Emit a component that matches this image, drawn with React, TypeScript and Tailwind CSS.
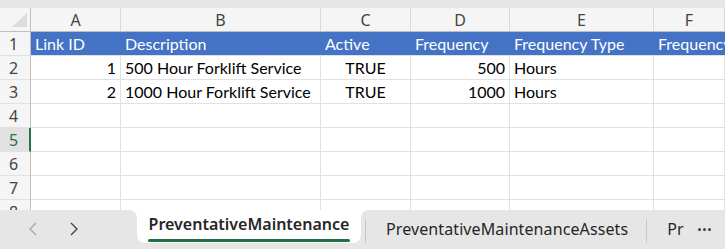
import React from 'react';

const cols = ['A', 'B', 'C', 'D', 'E', 'F'];
const widths = ['w-[90px]', 'w-[200px]', 'w-[90px]', 'w-[99px]', 'w-[144px]', 'flex-1'];

type Cell = { text?: string; align?: 'left' | 'right' | 'center' };

const headerRow: string[] = ['Link ID', 'Description', 'Active', 'Frequency', 'Frequency Type', 'Frequency'];

const dataRows: Cell[][] = [
    [
        { text: '1', align: 'right' },
        { text: '500 Hour Forklift Service' },
        { text: 'TRUE', align: 'center' },
        { text: '500', align: 'right' },
        { text: 'Hours' },
        {},
    ],
    [
        { text: '2', align: 'right' },
        { text: '1000 Hour Forklift Service' },
        { text: 'TRUE', align: 'center' },
        { text: '1000', align: 'right' },
        { text: 'Hours' },
        {},
    ],
    [{}, {}, {}, {}, {}, {}],
    [{}, {}, {}, {}, {}, {}],
    [{}, {}, {}, {}, {}, {}],
    [{}, {}, {}, {}, {}, {}],
    [{}, {}, {}, {}, {}, {}],
];

const cellFont = "font-['Lato','Liberation_Sans',sans-serif] text-[16px]";
const uiFont = "font-['Noto_Sans','Open_Sans',sans-serif]";

const alignClass = (a?: string) =>
    a === 'right' ? 'justify-end pr-[4px]' : a === 'center' ? 'justify-center' : 'justify-start pl-[4px]';

const RowHeader = ({ n, selected }: { n: number; selected?: boolean }) => (
    <div
        className={`w-[31px] shrink-0 h-full flex items-center pl-[9px] border-b border-[#e1e1e1] ${uiFont} text-[16px] ${
            selected
                ? 'bg-[#e1e1e1] text-[#217346] border-r-2 border-r-[#217346]'
                : 'bg-[#f5f5f5] text-[#444] border-r border-r-[#bfbfbf]'
        }`}
    >
        {n}
    </div>
);

const App = () => {
    return (
        <div className="w-[725px] h-[249px] bg-white overflow-hidden flex flex-col">
            <div className="h-2 shrink-0 bg-[#e6e6e6]" />

            <div className="h-[202px] shrink-0 overflow-hidden">
                {/* column letters */}
                <div className="h-6 flex bg-[#f5f5f5] border-b border-[#bfbfbf]">
                    <div className="w-[31px] shrink-0 border-r border-[#bfbfbf] relative">
                        <svg className="absolute left-0 top-0" width="30" height="23" viewBox="0 0 30 23">
                            <polygon points="12,19 27,5 27,19" fill="#dcdcdc" />
                        </svg>
                    </div>
                    {cols.map((c, i) => (
                        <div
                            key={c}
                            className={`${widths[i]} shrink-0 flex items-center justify-center border-r border-[#d9d9d9] ${uiFont} text-[16px] text-[#444]`}
                        >
                            {c}
                        </div>
                    ))}
                </div>

                {/* table header */}
                <div className="h-6 flex">
                    <RowHeader n={1} />
                    {headerRow.map((h, i) => (
                        <div
                            key={i}
                            className={`${widths[i]} shrink-0 flex items-center pl-[4px] pt-[1px] whitespace-nowrap overflow-hidden bg-[#4472c4] text-white border-b border-[#e1e1e1] ${cellFont}`}
                        >
                            {h}
                        </div>
                    ))}
                </div>

                {dataRows.map((row, r) => (
                    <div key={r} className="h-6 flex">
                        <RowHeader n={r + 2} selected={r + 2 === 5} />
                        {row.map((cell, i) => (
                            <div
                                key={i}
                                className={`${widths[i]} shrink-0 flex items-center pt-[1px] whitespace-nowrap overflow-hidden border-r border-b border-[#e1e1e1] text-black ${cellFont} ${alignClass(cell.align)}`}
                            >
                                {cell.text}
                            </div>
                        ))}
                    </div>
                ))}
            </div>

            {/* sheet tabs */}
            <div className={`h-[39px] shrink-0 flex ${uiFont}`}>
                <div className="w-[137px] shrink-0 bg-[#e6e6e6] rounded-tr-lg flex items-center gap-[33px] pl-[29px] pb-[2px]">
                    <svg width="8" height="14" viewBox="0 0 8 14">
                        <polyline points="7,1 1,7 7,13" fill="none" stroke="#a6a6a6" strokeWidth="1.3" />
                    </svg>
                    <svg width="8" height="14" viewBox="0 0 8 14">
                        <polyline points="1,1 7,7 1,13" fill="none" stroke="#404040" strokeWidth="1.3" />
                    </svg>
                </div>
                <div className="w-[224px] shrink-0 bg-[#e6e6e6] flex flex-col">
                    <div className="h-[33px] bg-white rounded-b-lg flex flex-col items-center justify-end">
                        <span className="text-[16px] font-semibold text-[#262626] leading-none mb-[7px]">
                            PreventativeMaintenance
                        </span>
                        <div className="w-[202px] h-[3px] bg-[#1e7145] rounded-full mb-[1px]" />
                    </div>
                </div>
                <div className="flex-1 bg-[#e6e6e6] rounded-tl-lg flex items-center">
                    <div className="w-px h-6 bg-[#c8c8c8] ml-[4px] mt-[2px]" />
                    <span className="ml-[20px] text-[16px] text-[#262626] pb-[1px] tracking-[0.1px]">
                        PreventativeMaintenanceAssets
                    </span>
                    <div className="w-px h-6 bg-[#c8c8c8] ml-[18px] mt-[2px]" />
                    <span className="ml-[20px] text-[16px] text-[#262626] pb-[1px]">Pr</span>
                    <div className="ml-[14px] flex gap-[2px] pb-[1px]">
                        <div className="w-[3px] h-[3px] rounded-full bg-[#404040]" />
                        <div className="w-[3px] h-[3px] rounded-full bg-[#404040]" />
                        <div className="w-[3px] h-[3px] rounded-full bg-[#404040]" />
                    </div>
                </div>
            </div>
        </div>
    );
};

export default App;
